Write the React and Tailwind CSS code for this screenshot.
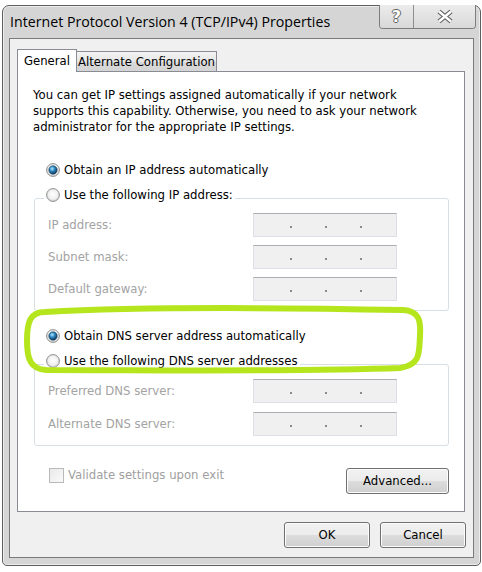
import React from 'react';

const body = "font-['DejaVu_Sans',sans-serif] text-[11.7px] leading-[16px]";
const btn = "flex items-center justify-center rounded-[3px] border border-[#707070] bg-[linear-gradient(#f2f2f2_0%,#ebebeb_50%,#dddddd_50%,#cfcfcf_100%)] shadow-[inset_0_0_0_1px_#fcfcfc] text-black";

const Radio = ({ checked }) => (
    <svg width="14" height="14" viewBox="0 0 14 14" className="shrink-0">
        <defs>
            <radialGradient id="radioFill" cx="50%" cy="45%" r="60%">
                <stop offset="0" stopColor="#ffffff" />
                <stop offset="0.6" stopColor="#f0f0f0" />
                <stop offset="1" stopColor="#c9c9c9" />
            </radialGradient>
            <radialGradient id="radioDot" cx="40%" cy="35%" r="70%">
                <stop offset="0" stopColor="#b4ebff" />
                <stop offset="0.45" stopColor="#2a84be" />
                <stop offset="1" stopColor="#0b2a4a" />
            </radialGradient>
        </defs>
        <circle cx="7" cy="7" r="6.4" fill="url(#radioFill)" stroke="#8e8f8f" strokeWidth="1" />
        {checked && <circle cx="7" cy="7" r="4.2" fill="url(#radioDot)" stroke="#163a5c" strokeWidth="0.6" />}
    </svg>
);

const IpBox = () => (
    <div className="w-[144px] h-[24px] bg-[#f0f0f0] border border-[#dcdfe5] border-t-[#abadb3] flex items-start pt-[12px] pl-[36px] gap-[33px]">
        <span className="w-[2px] h-[2px] bg-[#8a8a8a]" />
        <span className="w-[2px] h-[2px] bg-[#8a8a8a]" />
        <span className="w-[2px] h-[2px] bg-[#8a8a8a]" />
    </div>
);

const FieldRow = ({ label, className = '' }) => (
    <div className={`flex items-center pl-[13px] ${className}`}>
        <span className="w-[205px] text-[#a3a3a3]">{label}</span>
        <IpBox />
    </div>
);

const Legend = ({ text }) => (
    <div className="-mt-[12px] ml-[9px] w-fit bg-white px-[2px] flex items-center gap-[4px] h-[16px]">
        <Radio />
        <span>{text}</span>
    </div>
);

export default function App() {
    return (
        <div className="relative w-[482px] h-[572px] bg-white overflow-hidden pt-[5px] pl-[2px]">
            <div className="w-[479px] h-[561px] flex flex-col border border-[#5f5f5f] rounded-t-[7px] rounded-b-[5px] bg-[#d5d5d5] shadow-[inset_0_0_0_1px_#ececec]">
                {/* title bar */}
                <div className="h-[32px] flex items-center justify-between">
                    <span className="pl-[7px] font-['Open_Sans',sans-serif] text-[14.2px] text-black">
                        Internet Protocol Version 4 (TCP/IPv4) Properties
                    </span>
                    <div className="self-start -mt-px mr-[4px] flex h-[24px] rounded-b-[4px] border border-t-0 border-[#7d7d7d] overflow-hidden">
                        <div className="w-[34px] flex items-center justify-center border-r border-[#8f8f8f] bg-[linear-gradient(#ececec,#d8d8d8)]">
                            <span className="font-['DejaVu_Sans',sans-serif] font-bold text-[16px] leading-none text-white [text-shadow:-1px_0_#606060,1px_0_#606060,0_-1px_#606060,0_1px_#606060]">?</span>
                        </div>
                        <div className="w-[61px] flex items-center justify-center bg-[linear-gradient(#ececec,#d8d8d8)]">
                            <svg width="18" height="15" viewBox="0 0 18 15">
                                <path d="M3 2.5 L15 12.5 M15 2.5 L3 12.5" stroke="#5e5e5e" strokeWidth="4.6" />
                                <path d="M3 2.5 L15 12.5 M15 2.5 L3 12.5" stroke="#ffffff" strokeWidth="2.4" />
                            </svg>
                        </div>
                    </div>
                </div>

                {/* client area */}
                <div className={`mx-[6px] mb-[7px] flex-1 border border-[#7a7a7a] bg-[#f0f0f0] pt-[10px] ${body}`}>
                    <div className="ml-[7px] flex items-end h-[22px]">
                        <div className="relative z-10 -mb-px w-[60px] h-[23px] bg-white border border-b-0 border-[#898c95] flex items-center justify-center">
                            General
                        </div>
                        <div className="w-[140px] h-[20px] border border-l-0 border-b-0 border-[#898c95] bg-[linear-gradient(#f3f3f3,#e6e6e6_50%,#dadada_50%,#d4d4d4)] flex items-center justify-center">
                            Alternate Configuration
                        </div>
                    </div>

                    <div className="ml-[7px] w-[448px] h-[441px] bg-white border border-[#898c95] flex flex-col">
                        <p className="pt-[15px] pl-[15px] text-black">
                            You can get IP settings assigned automatically if your network<br />
                            supports this capability. Otherwise, you need to ask your network<br />
                            administrator for the appropriate IP settings.
                        </p>

                        <div className="mt-[27px] ml-[28px] flex items-center gap-[4px] h-[16px]">
                            <Radio checked />
                            <span>Obtain an IP address automatically</span>
                        </div>

                        <div className="mt-[20px] ml-[16px] w-[415px] h-[113px] border border-[#d5dfe5] rounded-[3px] flex flex-col">
                            <Legend text="Use the following IP address:" />
                            <FieldRow label="IP address:" className="mt-[10px]" />
                            <FieldRow label="Subnet mask:" className="mt-[8px]" />
                            <FieldRow label="Default gateway:" className="mt-[8px]" />
                        </div>

                        <div className="mt-[17px] ml-[28px] flex items-center gap-[4px] h-[16px]">
                            <Radio checked />
                            <span>Obtain DNS server address automatically</span>
                        </div>

                        <div className="mt-[20px] ml-[16px] w-[415px] h-[82px] border border-[#d5dfe5] rounded-[3px] flex flex-col">
                            <Legend text="Use the following DNS server addresses" />
                            <FieldRow label="Preferred DNS server:" className="mt-[10px]" />
                            <FieldRow label="Alternate DNS server:" className="mt-[9px]" />
                        </div>

                        <div className="mt-[22px] ml-[16px] w-[415px] flex justify-between items-start">
                            <div className="-mt-px pl-[15px] flex items-center gap-[4px] h-[16px]">
                                <span className="w-[15px] h-[15px] border border-[#b9b9b9] bg-[linear-gradient(135deg,#e9e9e9,#fafafa)]" />
                                <span className="text-[#a0a0a0]">Validate settings upon exit</span>
                            </div>
                            <button className={`${btn} w-[103px] h-[26px]`}>Advanced...</button>
                        </div>
                    </div>

                    <div className="mt-[10px] pr-[7px] flex justify-end gap-[10px]">
                        <button className={`${btn} w-[86px] h-[26px]`}>OK</button>
                        <button className={`${btn} w-[86px] h-[26px]`}>Cancel</button>
                    </div>
                </div>
            </div>

            {/* hand-drawn highlight */}
            <svg className="absolute inset-0 pointer-events-none" width="482" height="572" viewBox="0 0 482 572">
                <path
                    d="M45 312 C150 306 300 308 403 310 C419 311 421 320 420 336 C419 352 421 365 400 368 C300 372 150 370 46 370 C31 369 27 360 27 341 C27 322 30 312 45 312 Z"
                    fill="none"
                    stroke="#b5e51d"
                    strokeWidth="6"
                    strokeLinejoin="round"
                />
            </svg>
        </div>
    );
}
